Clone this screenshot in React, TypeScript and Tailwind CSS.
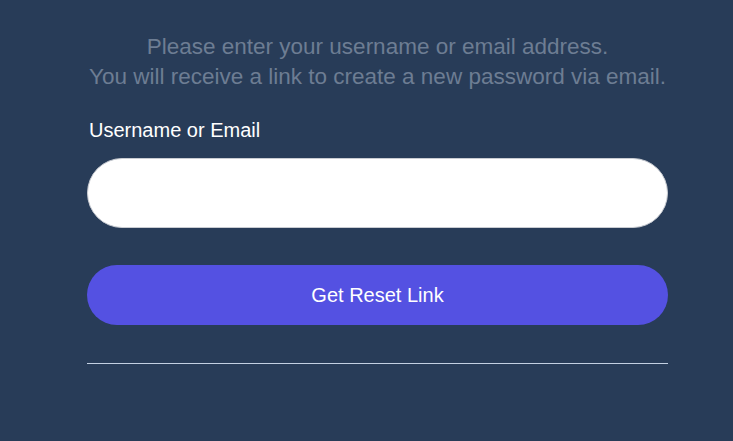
export default function App() {
  return (
    <div className="w-[733px] h-[441px] bg-[#283c58] overflow-hidden font-['Liberation_Sans',Arial,sans-serif]">
      <div className="ml-[87px] w-[581px] pt-[32px]">
        <p className="text-center text-[22.5px] leading-[30px] text-[#6d7d93] whitespace-nowrap">
          Please enter your username or email address.
          <br />
          You will receive a link to create a new password via email.
        </p>
        <label className="block mt-[26px] pl-[2px] text-[20px] leading-[24px] text-white">
          Username or Email
        </label>
        <input
          type="text"
          className="block mt-[16px] w-full h-[70px] rounded-full bg-white border border-[#c9ccd2] px-6 text-[18px] outline-none"
        />
        <button className="mt-[37px] w-full h-[60px] rounded-full bg-[#5451e2] text-white text-[20px]">
          Get Reset Link
        </button>
        <div className="mt-[38px] h-px bg-[#c3d0e2]" />
      </div>
    </div>
  );
}
